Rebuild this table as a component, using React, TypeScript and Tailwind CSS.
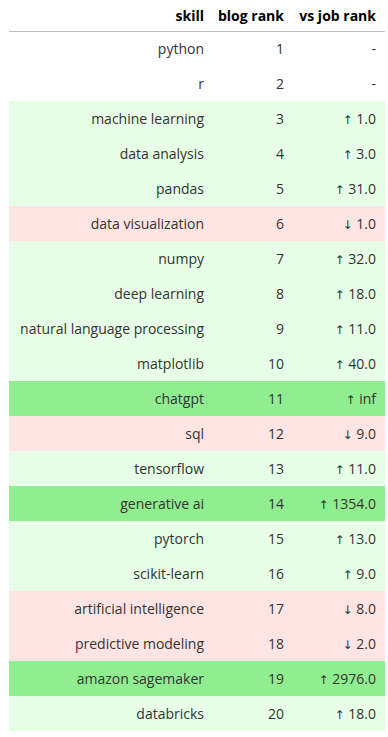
const rows: [string, number, string, string][] = [
  ["python", 1, "-", "none"],
  ["r", 2, "-", "none"],
  ["machine learning", 3, "↑ 1.0", "up"],
  ["data analysis", 4, "↑ 3.0", "up"],
  ["pandas", 5, "↑ 31.0", "up"],
  ["data visualization", 6, "↓ 1.0", "down"],
  ["numpy", 7, "↑ 32.0", "up"],
  ["deep learning", 8, "↑ 18.0", "up"],
  ["natural language processing", 9, "↑ 11.0", "up"],
  ["matplotlib", 10, "↑ 40.0", "up"],
  ["chatgpt", 11, "↑ inf", "big"],
  ["sql", 12, "↓ 9.0", "down"],
  ["tensorflow", 13, "↑ 11.0", "up"],
  ["generative ai", 14, "↑ 1354.0", "big"],
  ["pytorch", 15, "↑ 13.0", "up"],
  ["scikit-learn", 16, "↑ 9.0", "up"],
  ["artificial intelligence", 17, "↓ 8.0", "down"],
  ["predictive modeling", 18, "↓ 2.0", "down"],
  ["amazon sagemaker", 19, "↑ 2976.0", "big"],
  ["databricks", 20, "↑ 18.0", "up"],
]

const rowBg: Record<string, string> = {
  none: "bg-white",
  up: "bg-[#e6ffe6]",
  down: "bg-[#ffe4e4]",
  big: "bg-[#90ee90]",
}

// arrow glyph gets its own font so it isn't the tiny fallback one
const Diff = ({ text }: { text: string }) => {
  const arrow = text[0] === "↑" || text[0] === "↓"
  if (!arrow) return <>{text}</>
  return (
    <>
      <span className="font-['DejaVu_Sans',sans-serif] text-[12px]">{text[0]}</span>
      {text.slice(1)}
    </>
  )
}

export default function App() {
  return (
    <div className="bg-white min-h-[737px] w-[388px] pl-[9px] font-['Open_Sans','Noto_Sans',sans-serif] text-[14px]">
      <table className="w-[376px] border-collapse table-fixed">
        <colgroup>
          <col className="w-[203px]" />
          <col className="w-[80px]" />
          <col className="w-[93px]" />
        </colgroup>
        <thead>
          <tr className="h-[31px] border-b border-[#bdbdbd] text-black font-bold">
            <th className="text-right pr-2 align-middle">skill</th>
            <th className="text-right pr-2 align-middle">blog rank</th>
            <th className="text-right pr-[9px] align-middle">vs job rank</th>
          </tr>
        </thead>
        <tbody className="text-[#333]">
          {rows.map(([skill, rank, diff, kind]) => (
            <tr key={skill} className={`h-[35px] ${rowBg[kind]}`}>
              <td className="text-right pr-2 align-middle">{skill}</td>
              <td className="text-right pr-2 align-middle">{rank}</td>
              <td className="text-right pr-[9px] align-middle">
                <Diff text={diff} />
              </td>
            </tr>
          ))}
        </tbody>
      </table>
    </div>
  )
}
